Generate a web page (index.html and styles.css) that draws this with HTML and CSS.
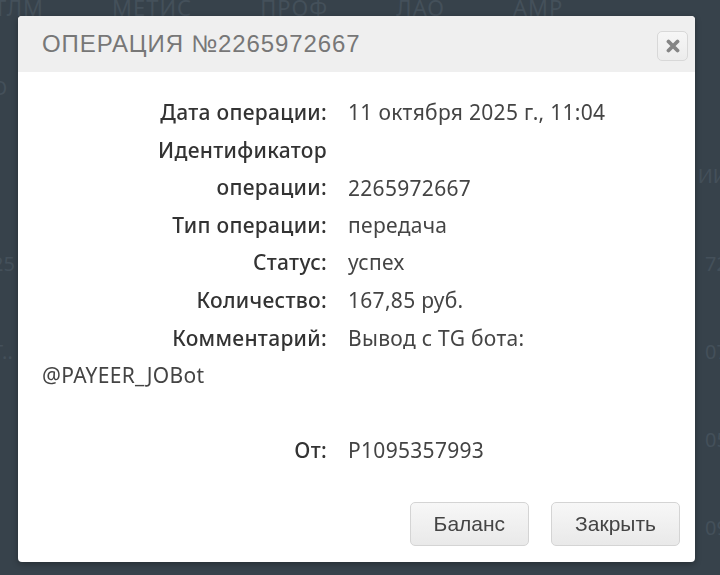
FILE: index.html
```html
<!DOCTYPE html>
<html lang="ru">
<head>
  <meta charset="UTF-8">
  <title>Операция</title>
  <link rel="stylesheet" href="styles.css">
</head>
<body>

  <div class="page">
    <div class="nav">
      <span>ТЛМ</span>
      <span>МЕТИС</span>
      <span>ПРОФ</span>
      <span>ЛАО</span>
      <span>АМР</span>
    </div>
    <div class="bg-rows">
      <div class="bg-row"><span>О</span><span></span></div>
      <div class="bg-row"><span></span><span>ИИ</span></div>
      <div class="bg-row"><span>25</span><span>72</span></div>
      <div class="bg-row"><span>Т..</span><span>07</span></div>
      <div class="bg-row"><span></span><span>05</span></div>
      <div class="bg-row"><span></span><span>09</span></div>
    </div>
  </div>

  <div class="modal">
    <div class="modal-header">
      <h2>Операция №2265972667</h2>
      <button class="close-btn" aria-label="Закрыть">
        <svg width="14" height="14" viewBox="0 0 14 14">
          <path d="M2.5 2.5 L11.5 11.5 M11.5 2.5 L2.5 11.5" stroke="#858585" stroke-width="3.8" stroke-linecap="round"/>
        </svg>
      </button>
    </div>
    <div class="modal-body">
      <div class="row"><span class="label">Дата операции:</span><span class="value">11 октября 2025 г., 11:04</span></div>
      <div class="row"><span class="label">Идентификатор операции:</span><span class="value">2265972667</span></div>
      <div class="row"><span class="label">Тип операции:</span><span class="value">передача</span></div>
      <div class="row"><span class="label">Статус:</span><span class="value">успех</span></div>
      <div class="row"><span class="label">Количество:</span><span class="value">167,85 руб.</span></div>
      <div class="row"><span class="label">Комментарий:</span><span class="value">Вывод с TG бота: @PAYEER_JOBot</span></div>
      <div class="row empty"></div>
      <div class="row"><span class="label">От:</span><span class="value">P1095357993</span></div>
    </div>
    <div class="modal-footer">
      <button class="btn">Баланс</button>
      <button class="btn">Закрыть</button>
    </div>
  </div>

</body>
</html>
```

FILE: styles.css
```css
body {
  margin: 0;
  padding: 0;
  background-color: #37424b;
  font-family: "Noto Sans", Arial, sans-serif;
  overflow: hidden;
}
.page {
  height: 575px;
  color: #44505a;
}
.nav {
  display: flex;
  gap: 68px;
  margin-top: -8px;
  font-size: 22px;
  letter-spacing: 1px;
}
.nav span:first-child {
  margin-left: -6px;
}
.bg-rows {
  margin-top: 22px;
}
.bg-row {
  display: flex;
  justify-content: space-between;
  height: 88px;
  line-height: 88px;
  font-size: 20px;
  margin: 0 -8px;
}
.modal {
  position: fixed;
  left: 18px;
  top: 16px;
  width: 677px;
  height: 546px;
  background-color: white;
  border-radius: 4px;
  box-shadow: 0px 2px 6px rgba(0,0,0,0.3);
  display: flex;
  flex-direction: column;
  overflow: hidden;
}
.modal-header {
  background-color: #efefef;
  height: 56px;
  display: flex;
  align-items: center;
  justify-content: space-between;
  padding: 0 7px 0 24px;
}
.modal-header h2 {
  margin: 0;
  font-family: "Liberation Sans", Arial, sans-serif;
  font-weight: normal;
  font-size: 24px;
  letter-spacing: 0.9px;
  text-transform: uppercase;
  color: #777;
}
.close-btn {
  width: 31px;
  height: 30px;
  border: 1px solid #d8d8d8;
  border-radius: 5px;
  background: linear-gradient(#f6f6f6, #ececec);
  display: flex;
  align-items: center;
  justify-content: center;
  padding: 0;
  margin-top: 4px;
}
.modal-body {
  flex: 1;
  padding: 22px 20px 0 24px;
  font-size: 21px;
  letter-spacing: 0.3px;
  line-height: 37.6px;
  color: #444;
}
.row {
  display: block;
}
.row.empty {
  height: 37.6px;
}
.label {
  display: inline-block;
  box-sizing: border-box;
  width: 285px;
  padding-left: 12px;
  text-align: right;
  font-weight: 500;
  color: #333;
  margin-right: 21px;
}
.modal-footer {
  display: flex;
  justify-content: flex-end;
  gap: 22px;
  padding: 0 15px 16px 0;
}
.btn {
  height: 44px;
  padding: 0 23px;
  font-family: "Liberation Sans", Arial, sans-serif;
  font-size: 21px;
  color: #444;
  border: 1px solid #d4d4d4;
  border-radius: 5px;
  background: linear-gradient(#f7f7f7, #e9e9e9);
}
```
